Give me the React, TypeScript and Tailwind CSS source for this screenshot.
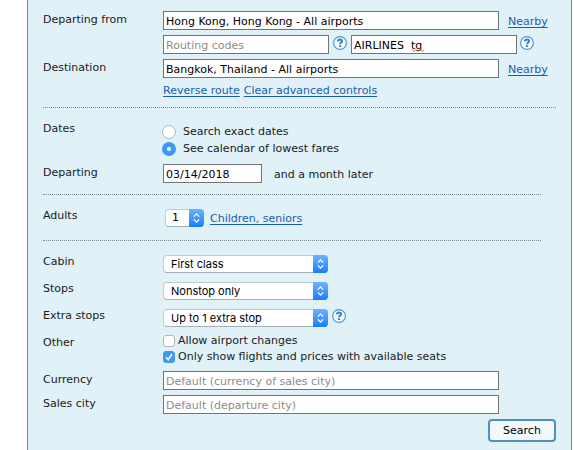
import {ComponentProps, FC, PropsWithChildren} from 'react'

interface RowProps extends PropsWithChildren {
  label?: string,
  htmlFor?: string,
  labelClassName?: string
}

const Row: FC<RowProps> = ({label, htmlFor, labelClassName, children}) => (
  <div className="flex items-start">
    <label htmlFor={htmlFor} className={`w-[120px] shrink-0 leading-[18px] ${labelClassName || ''}`}>{label}</label>
    <div className="min-w-0 grow">{children}</div>
  </div>
)

const TextInput: FC<ComponentProps<'input'>> = ({className, ...props}) => (
  <input
    type="text"
    className={`h-[19px] border border-[#747474] bg-white px-[2px] pt-[2px] text-black placeholder:text-[#8c8c8c] ${className || ''}`}
    {...props}
  />
)

const TextLink: FC<PropsWithChildren> = ({children}) => (
  <a href="#" className="whitespace-nowrap text-[#1a5cab] underline underline-offset-2">{children}</a>
)

const HelpButton: FC<{className?: string}> = ({className}) => (
  <button type="button" aria-label="Help" className={`shrink-0 ${className || ''}`}>
    <svg width="14" height="14" viewBox="0 0 14 14" fill="none">
      <circle cx="7" cy="7" r="6.4" fill="#f4fafd" stroke="#4a94d0" strokeWidth="1.1"/>
      <path d="M4.9 5.4C5 4.1 5.9 3.5 7.1 3.5c1.2 0 2 .6 2 1.6C9.1 6.6 7.1 6.6 7.1 8.3" stroke="#2f7fc2" strokeWidth="1.9"/>
      <rect x="6.1" y="9.2" width="2" height="1.8" fill="#2f7fc2"/>
    </svg>
  </button>
)

interface SelectBoxProps {
  id: string,
  options: string[],
  className?: string,
  selectClassName?: string
}

const SelectBox: FC<SelectBoxProps> = ({id, options, className, selectClassName}) => (
  <div className={`relative h-[18px] shrink-0 ${className || ''}`}>
    <select
      id={id}
      className={`block h-[18px] w-full appearance-none rounded-[4px] border border-[#bccbd4] border-b-[#a3b0b8] bg-white leading-4 text-black ${selectClassName || "pl-[7px] font-['Inter',sans-serif]"}`}>
      {options.map(option => <option key={option}>{option}</option>)}
    </select>
    <span
      className="pointer-events-none absolute inset-y-0 right-0 flex w-[15px] items-center justify-center rounded-r-[4px] bg-linear-to-b from-[#6cb3fa] to-[#147bfb]">
      <svg width="7" height="10" viewBox="0 0 7 10" fill="none" stroke="white" strokeWidth="1.3">
        <path d="M.8 3.6 3.5.9l2.7 2.7M.8 6.4l2.7 2.7 2.7-2.7"/>
      </svg>
    </span>
  </div>
)

const Radio: FC<{label: string, checked?: boolean}> = ({label, checked}) => (
  <label className="-ml-px flex h-[17px] items-center gap-[7px] leading-[17px]">
    <input
      type="radio"
      name="dates"
      defaultChecked={checked}
      className="size-[14px] appearance-none rounded-full border border-[#b0b5b8] bg-white checked:border-[5px] checked:border-[#3f97f7]"
    />
    {label}
  </label>
)

const Checkbox: FC<{label: string, checked?: boolean}> = ({label, checked}) => (
  <label className="relative flex h-4 items-center gap-[3px]">
    <input
      type="checkbox"
      defaultChecked={checked}
      className="peer size-[12px] appearance-none rounded-[3px] border border-[#b0b5b8] bg-white checked:border-[#3f97f7] checked:bg-[#3f97f7]"
    />
    <svg className="pointer-events-none absolute left-0 hidden peer-checked:block" width="12" height="12" viewBox="0 0 12 12" fill="none">
      <path d="M3 6.3 5.2 8.8 9 3" stroke="white" strokeWidth="1.6"/>
    </svg>
    <span>{label}</span>
  </label>
)

const App: FC = () => (
  <div className="min-h-screen bg-white pr-[3px] pl-[27px] font-['DejaVu_Sans',sans-serif] text-[11px] leading-4 text-[#1a1a1a]">
    <form className="min-h-screen border-x border-[#4f8fc1] bg-[#e1f1f8] px-[15px] pt-[11px]">
      <section className="flex flex-col gap-[5px] border-b border-dotted border-[#808890] pb-2">
        <Row label="Departing from" htmlFor="from">
          <div className="flex items-end gap-[9px]">
            <TextInput id="from" className="w-[336px]" defaultValue="Hong Kong, Hong Kong - All airports"/>
            <TextLink>Nearby</TextLink>
          </div>
        </Row>
        <Row>
          <div className="flex items-start">
            <TextInput aria-label="Routing codes" className="w-[166px]" placeholder="Routing codes"/>
            <HelpButton className="mx-1 pt-px"/>
            <div className="relative">
              <TextInput aria-label="Airlines" className="block w-[166px]" spellCheck={false} defaultValue="AIRLINES  tg"/>
              {/* spelling mark below the airline code */}
              <svg className="pointer-events-none absolute top-[14px] left-[61px]" width="12" height="3" viewBox="0 0 12 3" fill="none">
                <path d="M0 .5 2 2.5l2-2 2 2 2-2 2 2 2-2" stroke="#e8503c"/>
              </svg>
            </div>
            <HelpButton className="ml-[3px] pt-px"/>
          </div>
        </Row>
        <Row label="Destination" htmlFor="to">
          <div className="flex items-end gap-[9px]">
            <TextInput id="to" className="w-[336px]" defaultValue="Bangkok, Thailand - All airports"/>
            <TextLink>Nearby</TextLink>
          </div>
          <div className="mt-[5px] flex gap-1">
            <TextLink>Reverse route</TextLink>
            <TextLink>Clear advanced controls</TextLink>
          </div>
        </Row>
      </section>

      <section className="mr-[15px] flex flex-col gap-[7px] border-b border-dotted border-[#808890] pt-3 pb-[11px]">
        <Row label="Dates">
          <div className="pt-[3px]">
            <Radio label="Search exact dates"/>
            <Radio label="See calendar of lowest fares" checked/>
          </div>
        </Row>
        <Row label="Departing" htmlFor="departing">
          <div className="flex items-end gap-3">
            <TextInput id="departing" className="w-[99px]" defaultValue="03/14/2018"/>
            <span>and a month later</span>
          </div>
        </Row>
      </section>

      <section className="mr-[15px] border-b border-dotted border-[#808890] pt-3 pb-[13px]">
        <Row label="Adults" htmlFor="adults">
          <div className="flex items-end gap-[6px] pt-[2px] pl-[2px]">
            <SelectBox id="adults" options={['1', '2', '3', '4']} className="w-[39px]" selectClassName="pl-[6px]"/>
            <TextLink>Children, seniors</TextLink>
          </div>
        </Row>
      </section>

      <section className="pt-3">
        <div className="flex flex-col gap-[7px]">
          <Row label="Cabin" htmlFor="cabin">
            <div className="pt-[2px]">
              <SelectBox id="cabin" options={['First class', 'Business class', 'Economy']} className="w-[165px]"/>
            </div>
          </Row>
          <Row label="Stops" htmlFor="stops">
            <div className="pt-[2px]">
              <SelectBox id="stops" options={['Nonstop only', 'No limit']} className="w-[165px]"/>
            </div>
          </Row>
          <Row label="Extra stops" htmlFor="extra">
            <div className="flex items-start gap-1 pt-[2px]">
              <SelectBox id="extra" options={['Up to 1 extra stop', 'Up to 2 extra stops']} className="w-[165px]"/>
              <HelpButton/>
            </div>
          </Row>
        </div>
        <div className="mt-[6px]">
          <Row label="Other" labelClassName="pt-px">
            <Checkbox label="Allow airport changes"/>
            <Checkbox label="Only show flights and prices with available seats" checked/>
          </Row>
        </div>
        <div className="mt-[6px] flex flex-col gap-[5px]">
          <Row label="Currency" htmlFor="currency">
            <TextInput id="currency" className="block w-[336px]" placeholder="Default (currency of sales city)"/>
          </Row>
          <Row label="Sales city" htmlFor="city">
            <TextInput id="city" className="block w-[336px]" placeholder="Default (departure city)"/>
          </Row>
        </div>
        <div className="mt-[5px] flex justify-end">
          <button
            type="button"
            className="h-[23px] w-[68px] rounded-[4px] border-2 border-[#528fc0] bg-[#f2f9fd] pt-px leading-4 text-black">
            Search
          </button>
        </div>
      </section>
    </form>
  </div>
)

export default App
